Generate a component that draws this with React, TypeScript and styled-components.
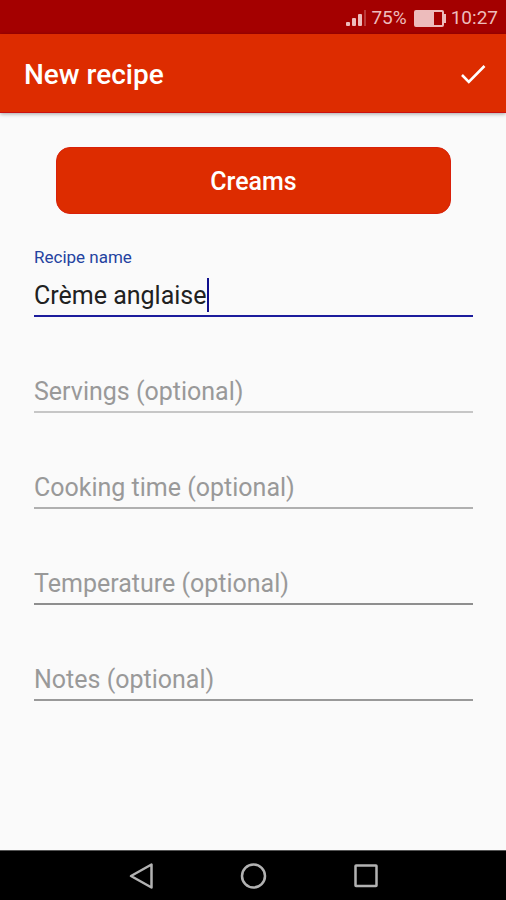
import React, { useState } from "react";
import styled, { createGlobalStyle } from "styled-components";

const GlobalStyle = createGlobalStyle`
  *, *::before, *::after { box-sizing: border-box; }
  body { margin: 0; background: #fafafa; font-family: Roboto, "Liberation Sans", sans-serif; }
  button, input { font-family: inherit; }
`;

const Screen = styled.div`
  display: flex;
  flex-direction: column;
  min-height: 100vh;
  background: #fafafa;
`;

const StatusBar = styled.div`
  display: flex;
  align-items: center;
  justify-content: flex-end;
  gap: 4px;
  height: 34px;
  padding: 2px 8px 0 0;
  background: #a40000;
  color: #edbcbc;
  font-size: 19px;
  line-height: 24px;
`;

const BatteryLevel = styled.span`
  margin-right: 2px;
`;

const AppBar = styled.header`
  display: flex;
  align-items: center;
  justify-content: space-between;
  height: 79px;
  padding: 4px 16px 0 24px;
  background: #dd2c00;
  border-bottom: 1px solid #cb1010;
  box-shadow: 0 1px 4px rgba(0, 0, 0, 0.35);
`;

const Title = styled.h1`
  margin: 0;
  color: #fff;
  font-size: 28px;
  font-weight: 500;
  line-height: 32px;
`;

const IconButton = styled.button`
  display: grid;
  place-items: center;
  padding: 0;
  border: 0;
  background: none;
  cursor: pointer;
`;

const Form = styled.form`
  display: flex;
  flex: 1;
  flex-direction: column;
  padding: 34px 33px 0 34px;
`;

const CategoryButton = styled.button`
  height: 67px;
  margin: 0 22px 33px;
  padding: 2px 0 0;
  border: 1px solid #d9200a;
  border-radius: 14px;
  background: #dd2c00;
  color: #fff;
  font-size: 25px;
  font-weight: 500;
  cursor: pointer;
`;

const Field = styled.div`
  display: flex;
  flex-direction: column;
  height: 96px;
`;

const Label = styled.label`
  height: 20px;
  color: #2442a0;
  font-size: 17px;
  line-height: 20px;
`;

const InputRow = styled.div<{ $line: string }>`
  display: flex;
  align-items: center;
  height: 50px;
  padding-top: 8px;
  border-bottom: 2px solid ${({ $line }) => $line};
`;

const Input = styled.input<{ $active: boolean }>`
  flex: ${({ $active }) => ($active ? "0 1 auto" : "1")};
  field-sizing: ${({ $active }) => ($active ? "content" : "fixed")};
  min-width: 0;
  height: 34px;
  padding: 0;
  border: 0;
  outline: 0;
  background: transparent;
  color: #212121;
  caret-color: ${({ $active }) => ($active ? "transparent" : "#1a1a8c")};
  font-size: 25px;

  &::placeholder {
    color: #999;
    opacity: 1;
  }
`;

const Caret = styled.span`
  width: 2px;
  height: 34px;
  background: #10108c;
`;

const NavBar = styled.nav`
  display: flex;
  align-items: center;
  justify-content: center;
  gap: 82px;
  height: 50px;
  border-top: 1px solid #555;
  background: #000;
`;

const fields = [
  { id: "name", label: "Recipe name", line: "#1c1c9c" },
  { id: "servings", label: "Servings (optional)", line: "#c6c6c6" },
  { id: "time", label: "Cooking time (optional)", line: "#b0b0b0" },
  { id: "temperature", label: "Temperature (optional)", line: "#8e8e8e" },
  { id: "notes", label: "Notes (optional)", line: "#999" },
];

const SignalIcon = () => (
  <svg width="21" height="17" viewBox="0 0 21 17" fill="#edbcbc" aria-hidden="true">
    <rect x="0" y="12" width="4" height="4" rx="1" />
    <rect x="6" y="8" width="4" height="8" rx="1" />
    <rect x="12" y="4" width="4" height="12" rx="1" />
    <rect x="18" y="0" width="2" height="16" opacity="0.3" />
  </svg>
);

const BatteryIcon = () => (
  <svg width="34" height="17" viewBox="0 0 34 17" aria-hidden="true">
    <rect x="2" y="1" width="28" height="15" rx="1" fill="none" stroke="#edbcbc" strokeWidth="2" />
    <rect x="2" y="2" width="19" height="13" fill="#edbcbc" />
    <path d="M31 4h2v9h-2z" fill="#edbcbc" />
  </svg>
);

const CheckIcon = () => (
  <svg width="34" height="34" viewBox="0 0 34 34" fill="none" aria-hidden="true">
    <path d="M6 17l6.8 6.8L28.5 8" stroke="#fff" strokeWidth="2.6" />
  </svg>
);

const navItems = [
  { name: "Back", shape: <path d="M25.5 3.5v23L5 15z" /> },
  { name: "Home", shape: <circle cx="15.5" cy="15" r="11.5" /> },
  { name: "Recent apps", shape: <rect x="5.5" y="4.5" width="21" height="20.5" rx="0.5" /> },
];

export default function App() {
  const [values, setValues] = useState<Record<string, string>>({ name: "Crème anglaise" });

  return (
    <Screen>
      <GlobalStyle />
      <StatusBar>
        <SignalIcon />
        <BatteryLevel>75%</BatteryLevel>
        <BatteryIcon />
        <time>10:27</time>
      </StatusBar>
      <AppBar>
        <Title>New recipe</Title>
        <IconButton type="submit" form="recipe" aria-label="Save recipe">
          <CheckIcon />
        </IconButton>
      </AppBar>
      <Form id="recipe" onSubmit={(event) => event.preventDefault()}>
        <CategoryButton type="button">Creams</CategoryButton>
        {fields.map(({ id, label, line }) => {
          const active = id === "name";
          return (
            <Field key={id}>
              <Label htmlFor={id}>{values[id] ? label : ""}</Label>
              <InputRow $line={line}>
                <Input
                  id={id}
                  $active={active}
                  aria-label={label}
                  placeholder={label}
                  value={values[id] ?? ""}
                  onChange={(event) => setValues({ ...values, [id]: event.target.value })}
                />
                {active && <Caret />}
              </InputRow>
            </Field>
          );
        })}
      </Form>
      <NavBar>
        {navItems.map(({ name, shape }) => (
          <IconButton key={name} type="button" aria-label={name}>
            <svg width="30" height="30" viewBox="0 0 30 30" fill="none" stroke="#b2b2b2" strokeWidth="2.5" strokeLinejoin="round">
              {shape}
            </svg>
          </IconButton>
        ))}
      </NavBar>
    </Screen>
  );
}
